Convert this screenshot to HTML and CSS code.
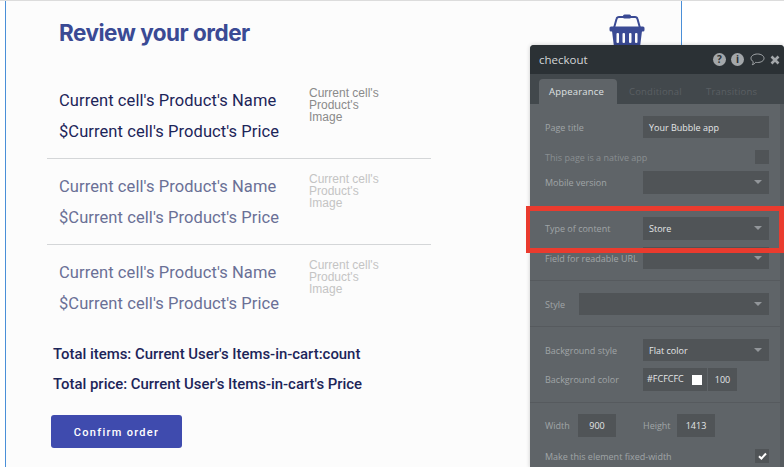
FILE: index.html
```html
<!DOCTYPE html>
<html>
<head>
  <title>Review your order</title>
  <link rel="stylesheet" href="styles.css">
</head>
<body>
  <div class="canvas">
    <div class="top-row">
      <h1 class="title">Review your order</h1>
      <svg class="basket" width="36" height="34" viewBox="0 0 36 34">
        <path d="M5 15 L7.500 6 Q8 4 10 4 H26 Q28 4 28.500 6 L31 15" fill="none" stroke="#3a4a94" stroke-width="2"/>
        <rect x="14" y="1.500" width="8" height="4" rx="1.500" fill="#3a4a94"/>
        <rect x="0.500" y="13.500" width="35" height="5" rx="1.500" fill="#3a4a94"/>
        <path d="M3 18 H33 L31 34 H5 Z" fill="#3a4a94"/>
        <rect x="7.500" y="20" width="2.500" height="10" rx="1" fill="#fcfcfc"/>
        <rect x="13.500" y="20" width="2.500" height="10" rx="1" fill="#fcfcfc"/>
        <rect x="20" y="20" width="2.500" height="10" rx="1" fill="#fcfcfc"/>
        <rect x="26" y="20" width="2.500" height="10" rx="1" fill="#fcfcfc"/>
      </svg>
    </div>

    <div class="cell cell-first">
      <div class="cell-text">
        <div class="product-line">Current cell's Product's Name</div>
        <div class="product-line">$Current cell's Product's Price</div>
      </div>
      <div class="product-image">Current cell's Product's Image</div>
    </div>
    <div class="cell cell-faded">
      <div class="cell-text">
        <div class="product-line">Current cell's Product's Name</div>
        <div class="product-line">$Current cell's Product's Price</div>
      </div>
      <div class="product-image">Current cell's Product's Image</div>
    </div>
    <div class="cell cell-faded cell-last">
      <div class="cell-text">
        <div class="product-line">Current cell's Product's Name</div>
        <div class="product-line">$Current cell's Product's Price</div>
      </div>
      <div class="product-image">Current cell's Product's Image</div>
    </div>

    <div class="totals">
      <div class="total-line">Total items: Current User's Items-in-cart:count</div>
      <div class="total-line">Total price: Current User's Items-in-cart's Price</div>
    </div>
    <button class="confirm-btn">Confirm order</button>
  </div>

  <div class="panel">
    <div class="panel-header">
      <span class="panel-name">checkout</span>
      <div class="panel-icons">
        <span class="round-icon">?</span>
        <span class="round-icon">i</span>
        <svg class="bubble-icon" width="15" height="13" viewBox="0 0 15 13">
          <path d="M7.500 1 C11.300 1 14 2.900 14 5.300 C14 7.700 11.300 9.500 7.500 9.500 C6.800 9.500 6.300 9.500 5.700 9.300 C4.900 10.500 3.500 11.500 2.300 11.700 C3 10.900 3.300 9.900 3.200 8.600 C1.800 7.800 1 6.600 1 5.300 C1 2.900 3.700 1 7.500 1 Z" fill="none" stroke="#a3a7aa" stroke-width="1"/>
        </svg>
        <svg width="10" height="10" viewBox="0 0 10 10">
          <path d="M1.500 1.500 L8.500 8.500 M8.500 1.500 L1.500 8.500" stroke="#a3a7aa" stroke-width="2.600"/>
        </svg>
      </div>
    </div>
    <div class="panel-tabs">
      <div class="tab tab-active">Appearance</div>
      <div class="tab">Conditional</div>
      <div class="tab">Transitions</div>
    </div>

    <div class="panel-body">
      <div class="section">
        <div class="prop prop-22 prop-gap-12">
          <label class="prop-label">Page title</label>
          <div class="field">Your Bubble app</div>
        </div>
        <div class="prop prop-short prop-gap-7">
          <label class="prop-label prop-label-dim">This page is a native app</label>
          <div class="checkbox"></div>
        </div>
        <div class="prop prop-gap-23">
          <label class="prop-label">Mobile version</label>
          <div class="field field-select"></div>
        </div>
        <div class="prop prop-gap-7">
          <label class="prop-label">Type of content</label>
          <div class="field field-select">Store</div>
        </div>
        <div class="prop prop-22">
          <label class="prop-label">Field for readable URL</label>
          <div class="field field-select"></div>
        </div>
      </div>

      <div class="section">
        <div class="prop prop-22">
          <label class="prop-label prop-label-narrow">Style</label>
          <div class="field field-select field-wide"></div>
        </div>
      </div>

      <div class="section">
        <div class="prop prop-22 prop-gap-7">
          <label class="prop-label">Background style</label>
          <div class="field field-select">Flat color</div>
        </div>
        <div class="prop">
          <label class="prop-label">Background color</label>
          <div class="color-field"><span class="color-value">#FCFCFC</span><span class="swatch"></span></div>
          <div class="opacity-field">100</div>
        </div>
      </div>

      <div class="section section-last">
        <div class="prop prop-gap-12">
          <label class="prop-label size-label">Width</label>
          <div class="size-field">900</div>
          <label class="prop-label size-label size-label-h">Height</label>
          <div class="size-field">1413</div>
        </div>
        <div class="prop prop-short">
          <label class="prop-label prop-label-fill">Make this element fixed-width</label>
          <div class="checkbox checkbox-on">
            <svg width="9" height="8" viewBox="0 0 9 8">
              <path d="M1 4.200 L3.400 6.500 L8 1.500" fill="none" stroke="#fff" stroke-width="2"/>
            </svg>
          </div>
        </div>
      </div>
    </div>
  </div>

  <div class="highlight"></div>
</body>
</html>
```

FILE: styles.css
```css
* {
  margin: 0;
  padding: 0;
  box-sizing: border-box;
}

body {
  width: 784px;
  height: 467px;
  position: relative;
  overflow: hidden;
  background: #fff;
  border-top: 1px solid #dcdcdc;
  font-family: 'Roboto', sans-serif;
}

/* Page being edited */
.canvas {
  width: 677px;
  height: 466px;
  margin-left: 5px;
  background: #fcfcfc;
  border-left: 1px solid #4a8fd8;
  border-right: 1px solid #4a8fd8;
}

.top-row {
  display: flex;
  justify-content: space-between;
  height: 44px;
  padding: 17px 36px 0 53px;
}

.title {
  font-family: 'Inter', sans-serif;
  font-size: 22.5px;
  line-height: 30px;
  font-weight: 700;
  letter-spacing: -0.5px;
  color: #3a4a94;
  white-space: nowrap;
}

.basket {
  margin-top: -5px;
  flex: none;
}

.cell {
  display: flex;
  width: 384px;
  height: 86px;
  margin-left: 41px;
  padding: 18px 0 0 12px;
  border-bottom: 1px solid #d4d6d8;
  color: #1c2559;
}

.cell-first {
  height: 114px;
  padding-top: 46px;
}

.cell-last {
  border-bottom: none;
}

.cell-text {
  width: 250px;
}

.product-line {
  font-size: 16.5px;
  line-height: 20px;
  height: 31px;
  letter-spacing: 0.08px;
  white-space: nowrap;
}

.product-image {
  width: 80px;
  margin-top: -4px;
  font-family: 'Liberation Sans', sans-serif;
  font-size: 12px;
  line-height: 12px;
  color: #8a8a8a;
}

.cell-faded .product-line {
  color: #6a7096;
}

.cell-faded .product-image {
  color: #c4c4c4;
}

.totals {
  margin: 13px 0 0 47px;
  color: #1c2559;
}

.total-line {
  font-size: 14.900px;
  font-weight: 500;
  line-height: 20px;
  height: 30px;
  white-space: nowrap;
}

.confirm-btn {
  display: block;
  width: 131px;
  height: 33px;
  margin: 11px 0 0 45px;
  padding-top: 1px;
  border: none;
  border-radius: 3px;
  background: #3f4bae;
  color: #fff;
  font-family: 'Roboto', sans-serif;
  font-size: 11px;
  font-weight: 500;
  letter-spacing: 1.3px;
}

/* Property editor floating over the page */
.panel {
  position: absolute;
  left: 530px;
  top: 44px;
  width: 254px;
  height: 423px;
  border-radius: 4px 4px 0 0;
  overflow: hidden;
  background: #5f6468;
  font-family: 'Open Sans', sans-serif;
  box-shadow: 0 0 4px rgba(0, 0, 0, 0.2);
}

.panel-header {
  display: flex;
  align-items: center;
  justify-content: space-between;
  height: 29px;
  padding: 0 4px 0 9px;
  background: #2b3135;
}

.panel-name {
  font-size: 11.5px;
  color: #d4d6d8;
}

.panel-icons {
  display: flex;
  align-items: center;
  gap: 5px;
}

.bubble-icon {
  margin-left: 1px;
}

.round-icon {
  width: 13px;
  height: 13px;
  border-radius: 50%;
  background: #a3a7aa;
  color: #2b3135;
  font-size: 10px;
  font-weight: 700;
  line-height: 13px;
  text-align: center;
}

.panel-tabs {
  display: flex;
  align-items: flex-end;
  height: 30px;
  padding-left: 9px;
  background: #42484c;
}

.tab {
  height: 25px;
  padding: 0 12px;
  font-size: 9.500px;
  line-height: 25px;
  color: #5a5f63;
  letter-spacing: 0.2px;
}

.tab-active {
  width: 78px;
  padding: 0 10px;
  border-radius: 4px 4px 0 0;
  background: #5f6468;
  color: #dfe1e2;
}

.panel-body {
  border-right: 4px solid #565b5f;
  height: 364px;
}

.section {
  padding: 12px 11px 11px 15px;
  border-bottom: 1px solid #565a5e;
}

.section-last {
  border-bottom: none;
  padding-top: 11px;
}

.prop {
  display: flex;
  align-items: center;
  height: 23px;
}

.prop-22 {
  height: 22px;
}

.prop-short {
  height: 14px;
}

.prop-gap-7 {
  margin-bottom: 7px;
}

.prop-gap-12 {
  margin-bottom: 12px;
}

.prop-gap-23 {
  margin-bottom: 23px;
}

.prop-label {
  width: 98px;
  flex: none;
  font-size: 9px;
  color: #a0a4a7;
  white-space: nowrap;
}

.prop-label-dim {
  color: #8a8f92;
  flex: 1;
}

.prop-label-narrow {
  width: 34px;
}

.prop-label-fill {
  flex: 1;
}

.field {
  position: relative;
  width: 126px;
  height: 100%;
  padding-left: 6px;
  background: #505457;
  color: #e4e6e7;
  font-size: 9px;
  line-height: 24px;
}

.field-select::after {
  content: '';
  position: absolute;
  right: 7px;
  top: 9px;
  border-left: 4px solid transparent;
  border-right: 4px solid transparent;
  border-top: 4px solid #92969a;
}

.field-wide {
  width: 191px;
}

.checkbox {
  display: flex;
  align-items: center;
  justify-content: center;
  flex: none;
  width: 14px;
  height: 14px;
  margin-left: auto;
  background: #505457;
}

.color-field {
  display: flex;
  align-items: center;
  justify-content: space-between;
  width: 64px;
  height: 23px;
  padding: 0 5px 0 4px;
  background: #505457;
  color: #e4e6e7;
  font-size: 9px;
}

.color-value {
  margin-bottom: 3px;
}

.swatch {
  width: 10px;
  height: 10px;
  background: #fff;
}

.opacity-field {
  width: 29px;
  height: 23px;
  margin-left: 1px;
  background: #505457;
  color: #e4e6e7;
  font-size: 9px;
  line-height: 23px;
  text-align: center;
}

.size-label {
  width: 33px;
}

.size-label-h {
  width: 34px;
  margin-left: 27px;
}

.size-field {
  width: 38px;
  height: 23px;
  background: #505457;
  color: #e4e6e7;
  font-size: 9px;
  line-height: 23px;
  text-align: center;
}

/* Red annotation box over the panel */
.highlight {
  position: absolute;
  left: 526px;
  top: 205px;
  width: 258px;
  height: 47px;
  border: 5px solid #ea3b2e;
  border-left-width: 4px;
}
```
